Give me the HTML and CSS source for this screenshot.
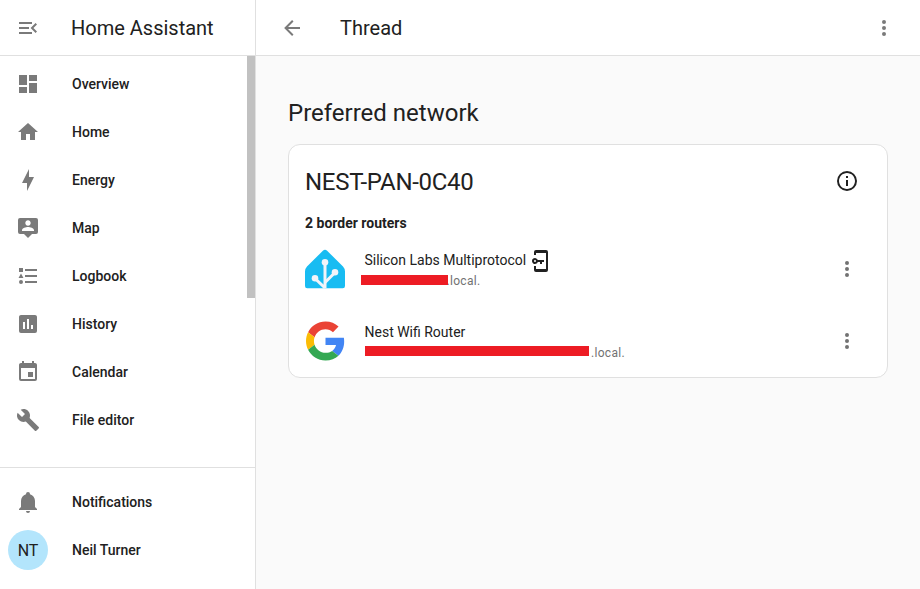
FILE: index.html
```html
<!DOCTYPE html>
<html lang="en">
<head>
<meta charset="utf-8">
<title>Thread – Home Assistant</title>
<link rel="stylesheet" href="styles.css">
</head>
<body>
<div class="app">
  <aside class="sidebar">
    <header class="sidebar-header">
      <svg class="icon" viewBox="0 0 24 24"><path d="M21,15.61L19.59,17L14.58,12L19.59,7L21,8.39L17.44,12L21,15.61M3,6H16V8H3V6M3,13V11H13V13H3M3,18V16H16V18H3Z"/></svg>
      <span class="title">Home Assistant</span>
    </header>
    <div class="nav-wrap">
      <nav class="nav">
        <a class="item"><svg class="icon" viewBox="0 0 24 24"><path d="M13,3V9H21V3M13,21H21V11H13M3,21H11V15H3M3,13H11V3H3V13Z"/></svg><span>Overview</span></a>
        <a class="item"><svg class="icon" viewBox="0 0 24 24"><path d="M10,20V14H14V20H19V12H22L12,3L2,12H5V20H10Z"/></svg><span>Home</span></a>
        <a class="item"><svg class="icon" viewBox="0 0 24 24"><path d="M11 15H6L13 1V9H18L11 23V15Z"/></svg><span>Energy</span></a>
        <a class="item"><svg class="icon" viewBox="0 0 24 24"><path fill-rule="evenodd" d="M20,2H4A2,2 0 0,0 2,4V16A2,2 0 0,0 4,18H8L12,22L16,18H20A2,2 0 0,0 22,16V4A2,2 0 0,0 20,2M12,4.3C13.5,4.3 14.7,5.5 14.7,7C14.7,8.5 13.5,9.7 12,9.7C10.5,9.7 9.3,8.5 9.3,7C9.3,5.5 10.5,4.3 12,4.3M18,15H6V14.1C6,12.1 10,11 12,11C14,11 18,12.1 18,14.1V15Z"/></svg><span>Map</span></a>
        <a class="item"><svg class="icon" viewBox="0 0 24 24"><path d="M5,9.5L7.5,14H2.5L5,9.5M3,4H7V8H3V4M5,20A2,2 0 0,0 7,18A2,2 0 0,0 5,16A2,2 0 0,0 3,18A2,2 0 0,0 5,20M9,5V7H21V5H9M9,19H21V17H9V19M9,13H21V11H9V13Z"/></svg><span>Logbook</span></a>
        <a class="item"><svg class="icon" viewBox="0 0 24 24"><path fill-rule="evenodd" d="M9,17H7V10H9V17M13,17H11V7H13V17M17,17H15V13H17V17M19,3H5C3.9,3 3,3.9 3,5V19A2,2 0 0,0 5,21H19A2,2 0 0,0 21,19V5C21,3.89 20.1,3 19,3Z"/></svg><span>History</span></a>
        <a class="item"><svg class="icon" viewBox="0 0 24 24"><path fill-rule="evenodd" d="M19,19H5V8H19M16,1V3H8V1H6V3H5C3.89,3 3,3.89 3,5V19A2,2 0 0,0 5,21H19A2,2 0 0,0 21,19V5C21,3.89 20.1,3 19,3H18V1M17,12H12V17H17V12Z"/></svg><span>Calendar</span></a>
        <a class="item"><svg class="icon" viewBox="0 0 24 24"><path d="M22.7,19L13.6,9.9C14.5,7.6 14,4.9 12.1,3C10.1,1 7.1,0.6 4.7,1.7L9,6L6,9L1.6,4.7C0.4,7.1 0.9,10.1 2.9,12.1C4.8,14 7.5,14.5 9.8,13.6L18.9,22.7C19.3,23.1 19.9,23.1 20.3,22.7L22.6,20.4C23.1,20 23.1,19.3 22.7,19Z"/></svg><span>File editor</span></a>
      </nav>
      <div class="track"><div class="thumb"></div></div>
    </div>
    <div class="sidebar-footer">
      <a class="item"><svg class="icon" viewBox="0 0 24 24"><path d="M21,19V20H3V19L5,17V11C5,7.9 7.03,5.17 10,4.29C10,4.19 10,4.1 10,4A2,2 0 0,1 12,2A2,2 0 0,1 14,4C14,4.1 14,4.19 14,4.29C16.97,5.17 19,7.9 19,11V17L21,19M14,21A2,2 0 0,1 12,23A2,2 0 0,1 10,21"/></svg><span>Notifications</span></a>
      <a class="item profile"><span class="avatar">NT</span><span>Neil Turner</span></a>
    </div>
  </aside>

  <main class="main">
    <header class="toolbar">
      <svg class="icon" viewBox="0 0 24 24"><path d="M20,11V13H8L13.5,18.5L12.08,19.92L4.16,12L12.08,4.08L13.5,5.5L8,11H20Z"/></svg>
      <h1 class="title">Thread</h1>
      <svg class="icon" viewBox="0 0 24 24"><path d="M12,16A2,2 0 0,1 14,18A2,2 0 0,1 12,20A2,2 0 0,1 10,18A2,2 0 0,1 12,16M12,10A2,2 0 0,1 14,12A2,2 0 0,1 12,14A2,2 0 0,1 10,12A2,2 0 0,1 12,10M12,4A2,2 0 0,1 14,6A2,2 0 0,1 12,8A2,2 0 0,1 10,6A2,2 0 0,1 12,4Z"/></svg>
    </header>
    <section class="content">
      <h2 class="heading">Preferred network</h2>
      <div class="card">
        <div class="card-header">
          <span class="network">NEST-PAN-0C40</span>
          <svg class="icon dark" viewBox="0 0 24 24"><path d="M11,9H13V7H11M12,20C7.59,20 4,16.41 4,12C4,7.59 7.59,4 12,4C16.41,4 20,7.59 20,12C20,16.41 16.41,20 12,20M12,2A10,10 0 0,0 2,12A10,10 0 0,0 12,22A10,10 0 0,0 22,12A10,10 0 0,0 12,2M11,17H13V11H11V17Z"/></svg>
        </div>
        <div class="count">2 border routers</div>
        <div class="router">
          <svg class="brand" viewBox="0 0 40 40">
            <path fill="#18bcf2" d="M17.9,1.7Q20,-0.4 22.1,1.7L38,17.6Q40,19.8 40,22.4V37Q40,39.2 37.8,39.2H2.2Q0,39.2 0,37V22.4Q0,19.8 2,17.6Z"/>
            <g fill="none" stroke="#f2f4f9" stroke-width="3"><path d="M20,13.3V39.2"/><path d="M10,29.5L20,38.8"/><path d="M30,23.5L20,33.5"/></g>
            <g fill="#f2f4f9"><circle cx="20" cy="13.3" r="3.3"/><circle cx="10" cy="29.3" r="3.3"/><circle cx="30" cy="23.3" r="3.3"/></g>
          </svg>
          <div class="info">
            <div class="name">Silicon Labs Multiprotocol
              <svg class="icon dark key" viewBox="0 0 24 24"><path d="M8,1H18A2,2 0 0,1 20,3V21A2,2 0 0,1 18,23H8A2,2 0 0,1 6,21V17H8V20H18V4H8V6H6V3A2,2 0 0,1 8,1Z"/><path fill-rule="evenodd" d="M9.8,11A3,3 0 1,0 9.8,13H12V15H14V13H16V11ZM7,11A1,1 0 1,1 7,13A1,1 0 1,1 7,11Z"/></svg>
            </div>
            <div class="host"><span class="redacted short"></span><span>.local.</span></div>
          </div>
          <svg class="icon menu" viewBox="0 0 24 24"><path d="M12,16A2,2 0 0,1 14,18A2,2 0 0,1 12,20A2,2 0 0,1 10,18A2,2 0 0,1 12,16M12,10A2,2 0 0,1 14,12A2,2 0 0,1 12,14A2,2 0 0,1 10,12A2,2 0 0,1 12,10M12,4A2,2 0 0,1 14,6A2,2 0 0,1 12,8A2,2 0 0,1 10,6A2,2 0 0,1 12,4Z"/></svg>
        </div>
        <div class="router">
          <svg class="brand google" viewBox="0 0 48 48">
            <path fill="#ea4335" d="M24 9.5c3.54 0 6.71 1.22 9.21 3.6l6.85-6.85C35.9 2.38 30.47 0 24 0 14.62 0 6.51 5.38 2.56 13.22l7.98 6.19C12.43 13.72 17.74 9.5 24 9.5z"/>
            <path fill="#4285f4" d="M46.98 24.55c0-1.57-.15-3.09-.38-4.55H24v9.02h12.94c-.58 2.96-2.26 5.48-4.78 7.18l7.73 6c4.51-4.18 7.09-10.36 7.09-17.65z"/>
            <path fill="#fbbc05" d="M10.53 28.59c-.48-1.45-.76-2.99-.76-4.59s.27-3.14.76-4.59l-7.98-6.19C.92 16.46 0 20.12 0 24c0 3.88.92 7.54 2.56 10.78l7.97-6.19z"/>
            <path fill="#34a853" d="M24 48c6.48 0 11.93-2.13 15.89-5.81l-7.73-6c-2.15 1.45-4.92 2.3-8.16 2.3-6.26 0-11.57-4.22-13.47-9.91l-7.98 6.19C6.51 42.62 14.62 48 24 48z"/>
          </svg>
          <div class="info">
            <div class="name">Nest Wifi Router</div>
            <div class="host"><span class="redacted long"></span><span>.local.</span></div>
          </div>
          <svg class="icon menu" viewBox="0 0 24 24"><path d="M12,16A2,2 0 0,1 14,18A2,2 0 0,1 12,20A2,2 0 0,1 10,18A2,2 0 0,1 12,16M12,10A2,2 0 0,1 14,12A2,2 0 0,1 12,14A2,2 0 0,1 10,12A2,2 0 0,1 12,10M12,4A2,2 0 0,1 14,6A2,2 0 0,1 12,8A2,2 0 0,1 10,6A2,2 0 0,1 12,4Z"/></svg>
        </div>
      </div>
    </section>
  </main>
</div>
</body>
</html>
```
FILE: styles.css
```css
* { box-sizing: border-box; }
body {
  margin: 0;
  font-family: Roboto, sans-serif;
  font-size: 14px;
  color: #212121;
  background: #fafafa;
}
.app { display: flex; height: 589px; overflow: hidden; }
.icon { width: 24px; height: 24px; flex: none; fill: #7a7a7a; display: block; }
.icon.dark { fill: #212121; }
.icon.menu { fill: #727272; }
.title { font-size: 20px; font-weight: 400; line-height: 20px; margin: 0; }

.sidebar {
  width: 256px;
  flex: none;
  display: flex;
  flex-direction: column;
  background: #fff;
  border-right: 1px solid #e0e0e0;
}
.sidebar-header {
  display: flex;
  align-items: center;
  gap: 31px;
  height: 56px;
  flex: none;
  padding-left: 16px;
  border-bottom: 1px solid #e0e0e0;
}
.nav-wrap { display: flex; height: 411px; flex: none; }
.nav { flex: 1; padding-top: 4px; }
.track { width: 8px; }
.thumb { height: 242px; background: #c1c1c1; }
.item {
  display: flex;
  align-items: center;
  gap: 32px;
  height: 48px;
  padding-left: 16px;
  font-weight: 500;
  line-height: 20px;
}
.sidebar-footer { flex: 1; border-top: 1px solid #e0e0e0; padding-top: 10px; }
.profile { padding-left: 8px; gap: 24px; }
.avatar {
  width: 40px;
  height: 40px;
  border-radius: 50%;
  background: #b3e5fc;
  font-size: 16px;
  font-weight: 400;
  line-height: 41px;
  text-align: center;
}

.main { flex: 1; min-width: 0; }
.toolbar {
  display: flex;
  align-items: center;
  height: 56px;
  padding: 0 24px;
  background: #fff;
  border-bottom: 1px solid #e0e0e0;
}
.toolbar .title { flex: 1; margin-left: 36px; }
.content { padding: 41px 32px 0; }
.heading { margin: 0 0 15px; font-size: 24px; font-weight: 400; line-height: 32px; }
.card {
  height: 234px;
  padding: 16px;
  background: #fff;
  border: 1px solid #e0e0e0;
  border-radius: 12px;
}
.card-header { display: flex; justify-content: space-between; align-items: center; height: 41px; padding-right: 12px; }
.card-header .icon { margin-bottom: 1px; }
.network { font-size: 24px; letter-spacing: -0.288px; line-height: 40px; }
.count { margin-top: 11px; font-weight: 700; line-height: 20px; }
.router { display: flex; align-items: center; height: 72px; padding-right: 12px; }
.brand { width: 40px; height: 40px; flex: none; }
.google { padding-left: 1px; }
.info { flex: 1; padding: 3px 0 0 19.5px; }
.name { display: flex; align-items: center; gap: 2px; height: 20px; font-size: 14px; }
.key { margin-top: 2px; }
.host { display: flex; align-items: flex-start; height: 21px; font-size: 12px; line-height: 22px; letter-spacing: 0.3px; color: #727272; }
.redacted { height: 10px; background: #ed1c24; position: relative; }
.short { width: 87px; margin: 5px -1.5px 0 -3.5px; }
.long { width: 224px; margin: 4px 2px 0 0.5px; }
```
